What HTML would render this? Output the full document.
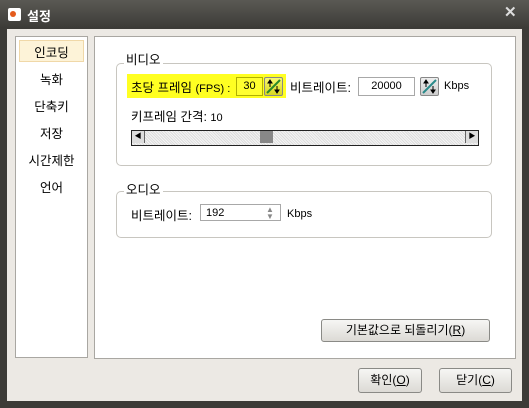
<!DOCTYPE html><html><head><meta charset="utf-8"><style>
body{margin:0;width:529px;height:408px;overflow:hidden;background:#3c3b37;font-family:"Liberation Sans","Noto Sans CJK KR",sans-serif;font-size:12px;color:#000}
.a{position:absolute}
.btn{position:absolute;border:1px solid #8a8a86;border-radius:3px;background:linear-gradient(#f6f6f4,#dcdad5);text-align:center;line-height:21px;font-size:12px}
.grp{position:absolute;border:1px solid #c8c6c0;border-radius:5px}
.gt{position:absolute;background:#fff;padding:0 2px;font-size:12px}
.inp{position:absolute;border:1px solid #a8a8a8;background:#fff;font-size:11px}
.spin{position:absolute;width:17px;height:17px;border:1px solid #888;border-radius:2px;background:linear-gradient(#eee,#ccc)}
</style></head><body>
<div class="a" style="left:0;top:0;width:529px;height:28px;background:linear-gradient(#5a5954,#3c3b37)"></div>
<div class="a" style="left:8px;top:8px;width:13px;height:13px;background:#fff;border-radius:2px"><div class="a" style="left:2px;top:3px;width:6px;height:6px;background:#e45b1c;border-radius:50%"></div></div>
<div class="a" style="left:27px;top:6px;color:#fff;font-weight:bold;font-size:13px">설정</div>
<div class="a" style="left:504px;top:3px;color:#ddd;font-weight:bold;font-size:15px">✕</div>
<div class="a" style="left:7px;top:29px;width:515px;height:372px;background:#ece9e4"></div>
<div class="a" style="left:15px;top:36px;width:71px;height:320px;background:#fff;border:1px solid #a9a7a2"></div>
<div class="a" style="left:19px;top:40px;width:63px;height:20px;background:#fdf3d8;border:1px solid #f0d8a8"></div>
<div class="a" style="left:15px;top:40px;width:73px;text-align:center;line-height:27px;font-size:12.5px">인코딩<br>녹화<br>단축키<br>저장<br>시간제한<br>언어</div>
<div class="a" style="left:94px;top:36px;width:420px;height:321px;background:#fff;border:1px solid #a9a7a2"></div>
<div class="grp" style="left:116px;top:63px;width:374px;height:101px"></div>
<div class="gt" style="left:124px;top:49px;font-size:12.5px">비디오</div>
<div class="a" style="left:127px;top:74px;width:159px;height:24px;background:#ffff22"></div>
<div class="a" style="left:131px;top:77px;font-size:12.5px">초당 프레임 <span style="font-size:11px">(FPS) :</span></div>
<div class="inp" style="left:236px;top:77px;width:25px;height:17px;border-color:#b0b000;background:#ffff30;text-align:center;line-height:17px">30</div>
<div class="spin" style="left:264px;top:77px;background:linear-gradient(#f8f870,#d8d820)"><svg width="17" height="17"><line x1="2" y1="15" x2="15" y2="2" stroke="#2a8a2a" stroke-width="2"/><path d="M5 2l-2 3h4zM5 5v4M12 15l-2-3h4zM12 12v-4" stroke="#000" fill="#000"/></svg></div>
<div class="a" style="left:290px;top:77px;font-size:12.5px">비트레이트:</div>
<div class="inp" style="left:358px;top:77px;width:55px;height:17px;text-align:center;line-height:17px">20000</div>
<div class="spin" style="left:420px;top:77px"><svg width="17" height="17"><line x1="2" y1="15" x2="15" y2="2" stroke="#2a8a8a" stroke-width="2"/><path d="M5 2l-2 3h4zM5 5v4M12 15l-2-3h4zM12 12v-4" stroke="#000" fill="#000"/></svg></div>
<div class="a" style="left:444px;top:80px;font-size:11px">Kbps</div>
<div class="a" style="left:131px;top:106px;font-size:12.5px">키프레임 간격: <span style="font-size:11px">10</span></div>
<div class="a" style="left:131px;top:130px;width:346px;height:14px;border:1px solid #222;background:repeating-linear-gradient(45deg,#ddd 0 1px,#f4f4f4 1px 2px)"></div>
<div class="a" style="left:132px;top:131px;width:12px;height:12px;background:#ddd;border-right:1px solid #666;font-size:7px;line-height:12px;text-align:center">◀</div>
<div class="a" style="left:465px;top:131px;width:12px;height:12px;background:#ddd;border-left:1px solid #666;font-size:7px;line-height:12px;text-align:center">▶</div>
<div class="a" style="left:260px;top:131px;width:13px;height:12px;background:#888"></div>
<div class="grp" style="left:116px;top:191px;width:374px;height:45px"></div>
<div class="gt" style="left:124px;top:179px;font-size:12.5px">오디오</div>
<div class="a" style="left:131px;top:205px;font-size:12.5px">비트레이트:</div>
<div class="inp" style="left:200px;top:204px;height:17px;line-height:17px;padding-left:5px;box-sizing:border-box;width:81px">192</div>
<div class="a" style="left:266px;top:206px;color:#888;font-size:8px;line-height:7px">▲<br>▼</div>
<div class="a" style="left:287px;top:208px;font-size:11px">Kbps</div>
<div class="btn" style="left:321px;top:319px;width:167px;height:21px">기본값으로 되돌리기(<u>R</u>)</div>
<div class="btn" style="left:358px;top:368px;width:62px;height:23px;line-height:23px">확인(<u>O</u>)</div>
<div class="btn" style="left:439px;top:368px;width:71px;height:23px;line-height:23px">닫기(<u>C</u>)</div>
</body></html>
